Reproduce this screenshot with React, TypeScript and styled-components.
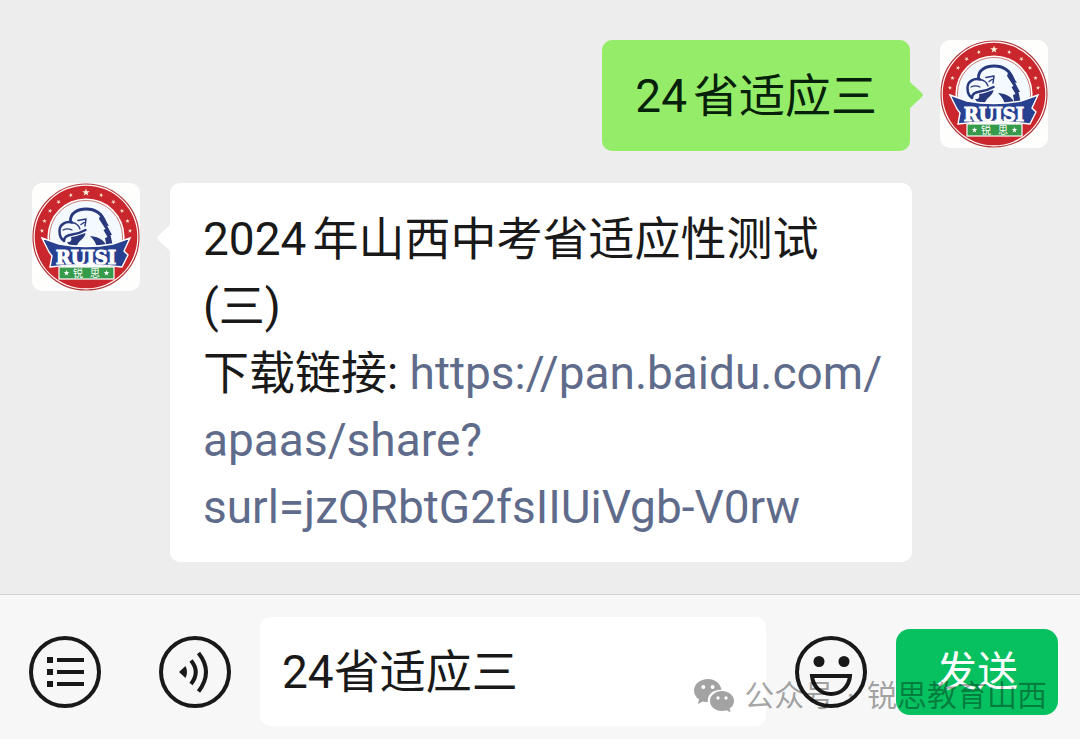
import React, { useState } from "react";
import styled, { createGlobalStyle } from "styled-components";

const GlobalStyle = createGlobalStyle`
  * { box-sizing: border-box; }
  body {
    margin: 0;
    background: #ededed;
    color: #191919;
    font-family: Roboto, "Noto Sans CJK SC", sans-serif;
  }
`;

const Page = styled.main`
  display: flex;
  flex-direction: column;
  min-height: 100vh;
`;

const Messages = styled.section`
  flex: 1;
  display: flex;
  flex-direction: column;
  gap: 32px;
  padding: 40px 32px 32px;
`;

const MessageRow = styled.article<{ $mine?: boolean }>`
  display: flex;
  flex-direction: ${(p) => (p.$mine ? "row-reverse" : "row")};
  align-items: flex-start;
  gap: 30px;
  ${(p) => (p.$mine ? "padding-left: 136px;" : "padding-right: 136px;")}
`;

const Avatar = styled.svg`
  flex: none;
  width: 108px;
  height: 108px;
  border-radius: 10px;
  background: #fefefc;
`;

const Bubble = styled.div<{ $mine?: boolean }>`
  position: relative;
  min-width: 0;
  padding: ${(p) => (p.$mine ? "23px 33px 21px" : "23px 22px 21px 33px")};
  border-radius: 10px;
  background: ${(p) => (p.$mine ? "#95ec69" : "#ffffff")};
  color: ${(p) => (p.$mine ? "#06210a" : "#191919")};
  font-size: 46px;
  line-height: 67px;

  &::after {
    content: "";
    position: absolute;
    top: 41px;
    ${(p) => (p.$mine ? "right: -13px;" : "left: -13px;")}
    width: 14px;
    height: 28px;
    background: inherit;
    clip-path: ${(p) =>
      p.$mine
        ? "polygon(0 0, 90% 42%, 100% 50%, 90% 58%, 0 100%)"
        : "polygon(100% 0, 10% 42%, 0 50%, 10% 58%, 100% 100%)"};
  }
`;

const Line = styled.p`
  margin: 0;
`;

const Figure = styled.span`
  margin-right: 6px;
`;

const ChatLink = styled.a`
  color: #5f6b8b;
  text-decoration: none;
`;

const Composer = styled.form`
  position: relative;
  display: flex;
  align-items: center;
  gap: 29px;
  padding: 22px 22px 13px 29px;
  border-top: 1px solid #d2d2d2;
  background: #f7f7f7;
`;

const Tools = styled.div`
  display: flex;
  gap: 58px;
`;

const IconButton = styled.button`
  flex: none;
  width: 72px;
  height: 72px;
  padding: 0;
  border: 0;
  background: none;
  color: #191919;

  svg {
    display: block;
    width: 72px;
    height: 72px;
  }
`;

const MessageInput = styled.input`
  flex: 1;
  min-width: 0;
  height: 109px;
  padding: 0 22px 8px;
  border: 0;
  border-radius: 10px;
  outline: 0;
  background: #ffffff;
  color: #191919;
  font: inherit;
  font-size: 46px;
`;

const SendButton = styled.button`
  flex: none;
  width: 162px;
  height: 86px;
  padding: 0 0 8px;
  border: 0;
  border-radius: 14px;
  background: #07c160;
  color: #ffffff;
  font: inherit;
  font-size: 41px;
`;

const Watermark = styled.div`
  position: absolute;
  right: 33px;
  bottom: 21px;
  display: flex;
  align-items: center;
  gap: 9px;
  color: rgba(0, 0, 0, 0.36);
  font-size: 30px;
  line-height: 45px;
  white-space: nowrap;
  pointer-events: none;
`;

const Separator = styled.span`
  margin: 0 5px;
`;

const STAR = "M0-1 .24-.32 .95-.31 .38.12 .59.81 0 .4-.59.81-.38.12-.95-.31-.24-.32Z";
const ringAngles = [-82, -69, -54, -38, -20, 20, 38, 54, 69, 82];

function Logo() {
  return (
    <Avatar viewBox="0 0 108 108" role="img" aria-label="RUISI 锐思">
      <circle cx="54" cy="54" r="53" fill="#fff" stroke="#b5393b" strokeWidth="1.2" />
      <circle cx="54" cy="54" r="51.3" fill="#c9272d" />
      <circle cx="54" cy="54" r="38.6" fill="#fff" />
      <circle cx="54" cy="54" r="36.6" fill="#f4f8ff" stroke="#c77b6c" strokeWidth="1" />
      <path d={STAR} transform="translate(54 9.5) scale(4)" fill="#fff2d8" />
      {ringAngles.map((a) => (
        <path
          key={a}
          d={STAR}
          transform={`rotate(${a} 54 54) translate(54 9.5) scale(2.3)`}
          fill="#ffe0cc"
        />
      ))}
      <g fill="none" stroke="#27387c" strokeLinecap="round" strokeLinejoin="round">
        <path d="M38.500 38C38 30 46 26 54 26 64 26 70 31 73 39" strokeWidth="2.8" />
        <path
          d="M40 39.500C34 38 27.500 41 27.500 48 27.500 53 29 56 32 58 32 54 36 52 40 51.500 46 51 50 49 53.500 47"
          strokeWidth="2.500"
        />
        <path d="M40 39.500C44 40 47 43 48 46M31 47C34 45.500 37 45.500 40 47" strokeWidth="1.300" />
        <path d="M46 37.500 54 36 53 43M49 41.500 52 39.500" strokeWidth="1.500" />
      </g>
      <g fill="#27387c">
        <path d="M69 30 77 43 75 42.500 80 52 78.500 52 81.500 66H75L73 55 75.500 54 71.500 47 73.500 46 67 36Z" />
        <path d="M39 54C44 54 48 51.500 53.500 50 53 56 46 57 44.500 64L37 62 35 59C39 59.500 40 57 39 54Z" />
        <path d="M58 53C68 54 74 58 76 67H65C65 61 62 57 58 53Z" />
      </g>
      <path
        d="M10 55 27 61Q54 66 81 61L98 55 92 68 96 72 90 84Q54 79 18 84L20 73 17 69Z"
        fill="#27408f"
        stroke="#fff"
        strokeWidth="1.4"
      />
      <text
        x="54"
        y="81"
        textAnchor="middle"
        fill="#fff"
        stroke="#fff"
        strokeWidth="1"
        fontFamily="'DejaVu Serif', serif"
        fontWeight="700"
        fontSize="18"
      >
        RUISI
      </text>
      <rect x="27" y="84" width="55" height="12" fill="#369a4b" stroke="#fff" strokeWidth="1.2" />
      <path d={STAR} transform="translate(34.5 90) scale(3)" fill="#fff" />
      <path d={STAR} transform="translate(74.5 90) scale(3)" fill="#fff" />
      <text
        x="46"
        y="94"
        textAnchor="middle"
        fill="#fff"
        fontFamily="'Noto Sans CJK SC', sans-serif"
        fontSize="10"
      >
        锐
      </text>
      <text
        x="63"
        y="94"
        textAnchor="middle"
        fill="#fff"
        fontFamily="'Noto Sans CJK SC', sans-serif"
        fontSize="10"
      >
        思
      </text>
    </Avatar>
  );
}

function ListIcon() {
  return (
    <svg viewBox="0 0 72 72" aria-hidden="true">
      <circle cx="36" cy="36" r="34" fill="none" stroke="currentColor" strokeWidth="4" />
      <path
        d="M18 21h6v6h-6zM18 33h6v6h-6zM18 45h6v6h-6zM28 22h27v4H28zM28 34h27v4H28zM28 46h27v4H28z"
        fill="currentColor"
      />
    </svg>
  );
}

function VoiceIcon() {
  return (
    <svg viewBox="0 0 72 72" aria-hidden="true">
      <g fill="none" stroke="currentColor" strokeWidth="4">
        <circle cx="36" cy="36" r="34" />
        <path d="M32 24.500Q41.500 36 32 48M39.500 17Q54.500 36 39.500 55.500" />
      </g>
      <path d="M20 36 26.500 30Q29.500 36 26.500 42Z" fill="currentColor" />
    </svg>
  );
}

function SmileIcon() {
  return (
    <svg viewBox="0 0 72 72" aria-hidden="true">
      <g fill="none" stroke="currentColor" strokeWidth="4">
        <circle cx="36" cy="36" r="34" />
        <path d="M17 40H55C54 51 46 58 36 58S18 51 17 40Z" />
      </g>
      <circle cx="24" cy="25.500" r="5.500" fill="currentColor" />
      <circle cx="49" cy="25.500" r="5.500" fill="currentColor" />
    </svg>
  );
}

function WechatMark() {
  return (
    <svg width="41" height="33" viewBox="0 0 41 33" fill="#a3a3a3" aria-hidden="true">
      <path
        fillRule="evenodd"
        d="M14 0C6.300 0 0 5 0 11.500c0 3.600 2 6.800 5 9L3.800 25l5-2.600c1.700.5 3.400.8 5.200.7C12.500 16 19 10.500 27.500 10.800 26.500 4.500 20.700 0 14 0ZM9.300 6a2 2 0 1 1 0 4 2 2 0 0 1 0-4Zm9.300 0a2 2 0 1 1 0 4 2 2 0 0 1 0-4Z"
      />
      <path
        fillRule="evenodd"
        d="M28 12c-6.800 0-12 4.500-12 10s5.200 10 12 10c1.500 0 3-.3 4.400-.7l4.200 2-1-3.700c2.700-1.800 4.400-4.600 4.400-7.600 0-5.500-5.300-10-12-10Zm-4 5.300a1.700 1.700 0 1 1 0 3.400 1.700 1.700 0 0 1 0-3.400Zm8 0a1.700 1.700 0 1 1 0 3.400 1.700 1.700 0 0 1 0-3.400Z"
      />
    </svg>
  );
}

export default function App() {
  const [draft, setDraft] = useState("24省适应三");
  return (
    <Page>
      <GlobalStyle />
      <Messages>
        <MessageRow $mine>
          <Logo />
          <Bubble $mine>
            <Line>
              <Figure>24</Figure>省适应三
            </Line>
          </Bubble>
        </MessageRow>
        <MessageRow>
          <Logo />
          <Bubble>
            <Line>
              <Figure>2024</Figure>年山西中考省适应性测试 (三)
            </Line>
            <Line>
              下载链接:{" "}
              <ChatLink href="https://pan.baidu.com/apaas/share?surl=jzQRbtG2fsIIUiVgb-V0rw">
                https://pan.baidu.com/
                <wbr />
                apaas/share?
                <wbr />
                surl=jzQRbtG2fsIIUiVgb-V0rw
              </ChatLink>
            </Line>
          </Bubble>
        </MessageRow>
      </Messages>
      <Composer onSubmit={(e) => e.preventDefault()}>
        <Tools>
          <IconButton type="button" aria-label="菜单">
            <ListIcon />
          </IconButton>
          <IconButton type="button" aria-label="语音">
            <VoiceIcon />
          </IconButton>
        </Tools>
        <MessageInput
          aria-label="消息"
          value={draft}
          onChange={(e) => setDraft(e.target.value)}
        />
        <IconButton type="button" aria-label="表情">
          <SmileIcon />
        </IconButton>
        <SendButton type="submit">发送</SendButton>
        <Watermark>
          <WechatMark />
          <span>
            公众号<Separator> · </Separator>锐思教育山西
          </span>
        </Watermark>
      </Composer>
    </Page>
  );
}
